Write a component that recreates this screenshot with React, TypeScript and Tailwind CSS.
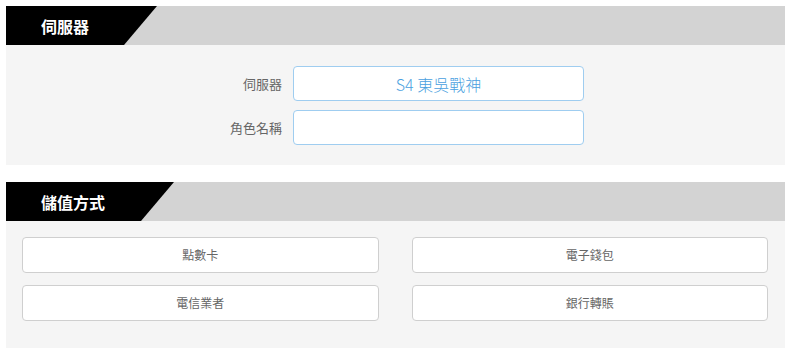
const font = { fontFamily: '"Noto Sans CJK TC", "Noto Sans", sans-serif' };

function SectionHeader({ title, tabWidth }: { title: string; tabWidth: string }) {
  return (
    <div className="h-[39px] bg-[#d3d3d3] flex">
      <div
        className={`${tabWidth} h-full bg-black flex items-center pl-[35px] [clip-path:polygon(0_0,100%_0,calc(100%-33px)_100%,0_100%)]`}
      >
        <span className="text-white text-[16px] font-bold leading-none">{title}</span>
      </div>
    </div>
  );
}

const methods = ['點數卡', '電子錢包', '電信業者', '銀行轉賬'];

export default function App() {
  return (
    <div className="w-[800px] h-[358px] bg-white pt-[6px] pl-[6px] pr-[15px]" style={font}>
      {/* Server */}
      <div>
        <SectionHeader title="伺服器" tabWidth="w-[151px]" />
        <div className="bg-[#f5f5f5] h-[120px] pt-[21px] flex flex-col gap-[9px]">
          <div className="flex items-center">
            <label className="w-[287px] pr-[11px] text-right text-[13px] text-[#666]">伺服器</label>
            <div className="w-[291px] h-[35px] bg-white border border-[#9fcdf0] rounded-[4px] flex items-center justify-center text-[16px] font-light text-[#4a9fe0]">
              S4 東吳戰神
            </div>
          </div>
          <div className="flex items-center">
            <label className="w-[287px] pr-[11px] text-right text-[13px] text-[#666]">角色名稱</label>
            <input
              className="w-[291px] h-[35px] bg-white border border-[#9fcdf0] rounded-[4px] outline-none px-3"
              style={font}
            />
          </div>
        </div>
      </div>

      {/* Payment */}
      <div className="mt-[17px]">
        <SectionHeader title="儲值方式" tabWidth="w-[168px]" />
        <div className="bg-[#f5f5f5] h-[127px] pt-[16px] pl-[16px] pr-[17px] grid grid-cols-2 gap-x-[33px] gap-y-[12px] content-start">
          {methods.map((m) => (
            <button
              key={m}
              className="h-[36px] bg-white border border-[#cfcfcf] rounded-[4px] text-[12px] text-[#666] flex items-center justify-center"
            >
              {m}
            </button>
          ))}
        </div>
      </div>
    </div>
  );
}
